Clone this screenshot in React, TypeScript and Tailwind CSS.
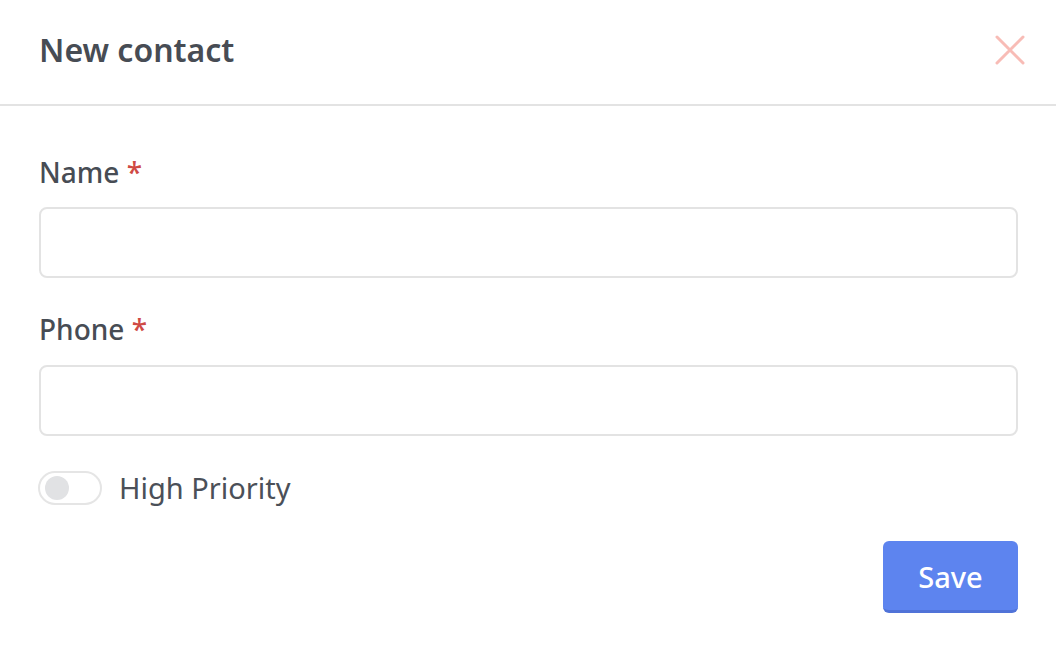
import React from 'react';

const App: React.FC = () => {
  return (
    <div className="w-[1056px] h-[650px] bg-white text-[#474c54]" style={{ fontFamily: '"Noto Sans", sans-serif' }}>
      {/* Header */}
      <div className="h-[106px] flex items-center justify-between pl-[39px] pr-[31px] border-b-2 border-[#e3e3e3]">
        <h2 className="text-[32px] font-semibold leading-none -mt-[4px]">New contact</h2>
        <button className="w-[30px] h-[30px] -mt-[4px]" aria-label="Close">
          <svg viewBox="0 0 30 30" className="w-[30px] h-[30px]" fill="none" stroke="#f8bcb6" strokeWidth="3" strokeLinecap="round">
            <path d="M2 2L28 28M28 2L2 28" />
          </svg>
        </button>
      </div>

      {/* Body */}
      <div className="pt-[46px] pl-[39px] pr-[38px]">
        <label className="block text-[28px] font-medium leading-[40px] mb-[15px]">
          Name <span className="text-[#cf4a44]">*</span>
        </label>
        <input className="block w-full h-[71px] rounded-[8px] border-2 border-[#e3e3e3] outline-none px-4 text-[28px]" />

        <label className="block text-[28px] font-medium leading-[40px] mt-[31px] mb-[16px]">
          Phone <span className="text-[#cf4a44]">*</span>
        </label>
        <input className="block w-full h-[71px] rounded-[8px] border-2 border-[#e3e3e3] outline-none px-4 text-[28px]" />

        <div className="flex items-center mt-[34px] -ml-[1px]">
          <div className="w-[64px] h-[34px] rounded-full border-2 border-[#e5e5e5] flex items-center pl-[5px]">
            <div className="w-[24px] h-[24px] rounded-full bg-[#e1e2e4]" />
          </div>
          <span className="ml-[17px] text-[29px] leading-[36px] text-[#4b5058]">High Priority</span>
        </div>

        <div className="flex justify-end mt-[35px]">
          <button className="w-[135px] h-[72px] rounded-[6px] bg-[#5d84ef] border-b-[3px] border-[#5073d8] text-white text-[29px] font-medium leading-none pt-[2px]">
            Save
          </button>
        </div>
      </div>
    </div>
  );
};

export default App;
